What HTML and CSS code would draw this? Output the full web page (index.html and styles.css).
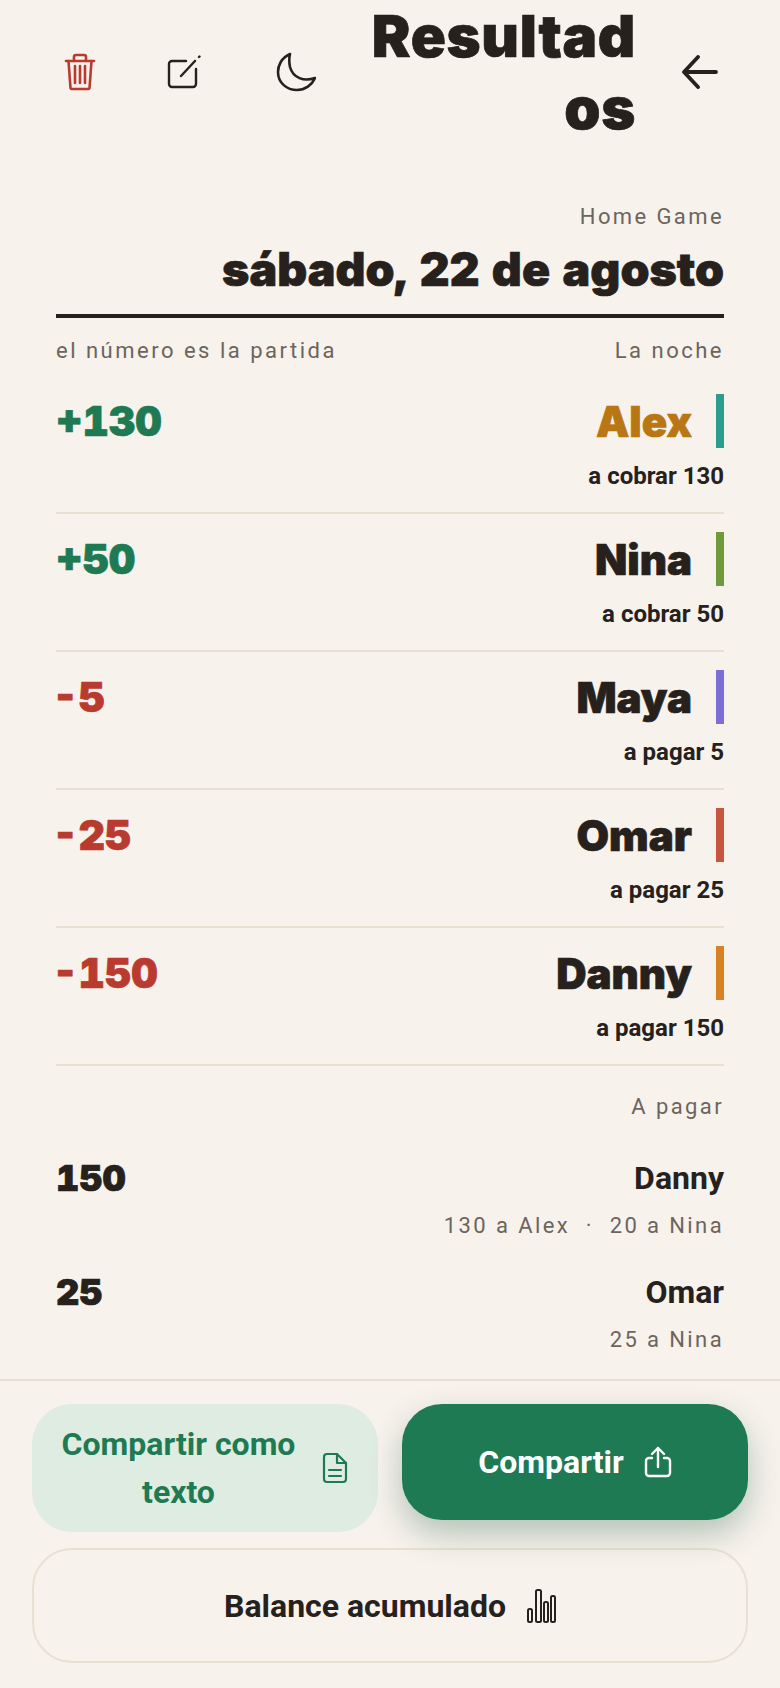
FILE: index.html
```html
<!DOCTYPE html>
<html lang="es">
<head>
    <meta charset="UTF-8">
    <meta name="viewport" content="width=device-width, initial-scale=1.0">
    <title>Resultados</title>
    <link rel="stylesheet" href="styles.css">
</head>
<body>
    <div class="app">
        <header class="topbar">
            <button class="icon-btn trash" aria-label="Borrar">
                <svg width="32" height="38" viewBox="0 0 32 38" fill="none" stroke="currentColor" stroke-width="2.6" stroke-linecap="round" stroke-linejoin="round">
                    <path d="M2 8h28"/>
                    <path d="M10 8V4a2 2 0 0 1 2-2h8a2 2 0 0 1 2 2v4"/>
                    <path d="M4.5 8l2 27a1.5 1.5 0 0 0 1.5 1h16a1.5 1.5 0 0 0 1.5-1l2-27"/>
                    <path d="M11 13v17M16 13v17M21 13v17"/>
                </svg>
            </button>
            <button class="icon-btn edit" aria-label="Editar">
                <svg width="34" height="34" viewBox="0 0 34 34" fill="none" stroke="currentColor" stroke-width="2.4" stroke-linecap="round" stroke-linejoin="round">
                    <path d="M19 6H5a3 3 0 0 0-3 3v20a3 3 0 0 0 3 3h21a3 3 0 0 0 3-3V14"/>
                    <path d="M14 21L28 6"/>
                    <path d="M32 2l.5-.5"/>
                </svg>
            </button>
            <button class="icon-btn moon" aria-label="Tema">
                <svg width="40" height="40" viewBox="0 0 40 40" fill="none" stroke="currentColor" stroke-width="2.6" stroke-linecap="round" stroke-linejoin="round">
                    <path d="M14 2C5 6 2 14 2 20c0 11 9 18 19 18 8 0 15-5 18-12-11 4-22 0-25-11-1-5-1-9 0-13z"/>
                </svg>
            </button>
            <h1 class="title">Resultad<br>os</h1>
            <button class="icon-btn back" aria-label="Volver">
                <svg width="36" height="34" viewBox="0 0 36 34" fill="none" stroke="currentColor" stroke-width="3.8" stroke-linecap="round" stroke-linejoin="round">
                    <path d="M34 17H3"/>
                    <path d="M16 2L2 17l14 15"/>
                </svg>
            </button>
        </header>

        <main class="content">
            <div class="game-label">Home Game</div>
            <div class="game-date">sábado, 22 de agosto</div>

            <div class="table-head">
                <span>el número es la partida</span>
                <span>La noche</span>
            </div>

            <div class="player">
                <div class="player-top">
                    <span class="amount plus">+130</span>
                    <span class="name winner">Alex</span>
                    <span class="color-bar teal"></span>
                </div>
                <div class="settle">a cobrar 130</div>
            </div>
            <div class="player">
                <div class="player-top">
                    <span class="amount plus">+50</span>
                    <span class="name">Nina</span>
                    <span class="color-bar olive"></span>
                </div>
                <div class="settle">a cobrar 50</div>
            </div>
            <div class="player">
                <div class="player-top">
                    <span class="amount minus">-5</span>
                    <span class="name">Maya</span>
                    <span class="color-bar violet"></span>
                </div>
                <div class="settle">a pagar 5</div>
            </div>
            <div class="player">
                <div class="player-top">
                    <span class="amount minus">-25</span>
                    <span class="name">Omar</span>
                    <span class="color-bar brick"></span>
                </div>
                <div class="settle">a pagar 25</div>
            </div>
            <div class="player">
                <div class="player-top">
                    <span class="amount minus">-150</span>
                    <span class="name">Danny</span>
                    <span class="color-bar orange"></span>
                </div>
                <div class="settle">a pagar 150</div>
            </div>

            <div class="pay-head">A pagar</div>
            <div class="payer">
                <div class="payer-top">
                    <span class="payer-amount">150</span>
                    <span class="payer-name">Danny</span>
                </div>
                <div class="payer-detail">130 a Alex &nbsp;·&nbsp; 20 a Nina</div>
            </div>
            <div class="payer">
                <div class="payer-top">
                    <span class="payer-amount">25</span>
                    <span class="payer-name">Omar</span>
                </div>
                <div class="payer-detail">25 a Nina</div>
            </div>
        </main>

        <footer class="actions">
            <div class="actions-row">
                <button class="action soft">
                    <span class="soft-label">Compartir como texto</span>
                    <svg width="26" height="32" viewBox="0 0 26 32" fill="none" stroke="currentColor" stroke-width="2.2" stroke-linecap="round" stroke-linejoin="round">
                        <path d="M15 2H5a3 3 0 0 0-3 3v22a3 3 0 0 0 3 3h16a3 3 0 0 0 3-3V11z"/>
                        <path d="M15 2v9h9"/>
                        <path d="M7 18h12M7 24h12"/>
                    </svg>
                </button>
                <button class="action primary">
                    <span>Compartir</span>
                    <svg width="28" height="32" viewBox="0 0 28 32" fill="none" stroke="currentColor" stroke-width="2.4" stroke-linecap="round" stroke-linejoin="round">
                        <path d="M8 12H5a3 3 0 0 0-3 3v12a3 3 0 0 0 3 3h18a3 3 0 0 0 3-3V15a3 3 0 0 0-3-3h-3"/>
                        <path d="M14 21V2"/>
                        <path d="M8 8l6-6 6 6"/>
                    </svg>
                </button>
            </div>
            <button class="action outline">
                <span>Balance acumulado</span>
                <svg width="30" height="34" viewBox="0 0 30 34" fill="none" stroke="currentColor" stroke-width="2" stroke-linejoin="round">
                    <rect x="2" y="20" width="4" height="13" rx="1.5"/>
                    <rect x="10" y="1" width="5" height="32" rx="1.5"/>
                    <rect x="18" y="13" width="4" height="20" rx="1.5"/>
                    <rect x="25" y="7" width="4" height="26" rx="1.5"/>
                </svg>
            </button>
        </footer>
    </div>
</body>
</html>
```

FILE: styles.css
```css
* {
    box-sizing: border-box;
}

body {
    margin: 0;
    background-color: #f7f2ec;
    color: #26211c;
    font-family: 'Roboto', sans-serif;
}

button {
    font-family: inherit;
    border: none;
    background: none;
    color: inherit;
    padding: 0;
}

.app {
    height: 1688px;
    display: flex;
    flex-direction: column;
    overflow: hidden;
}

/* letra gruesa de titulos y numeros */
.title,
.game-date,
.amount,
.name,
.payer-amount {
    font-family: 'Inter', sans-serif;
    font-weight: 900;
    font-feature-settings: "tnum";
    -webkit-text-stroke: 0.7px currentColor;
}

/* cabecera */
.topbar {
    height: 144px;
    flex: none;
    display: flex;
    align-items: center;
    padding: 0 60px;
}

.icon-btn {
    display: flex;
    flex: none;
    width: 40px;
    justify-content: center;
}

.icon-btn.trash {
    color: #b93a2e;
    margin-right: 64px;
}

.icon-btn.edit {
    margin-right: 72px;
}

.title {
    flex: 1;
    margin: 0 44px 0 0;
    font-size: 58px;
    line-height: 72px;
    letter-spacing: 0.7px;
    text-align: right;
}

/* contenido */
.content {
    flex: 1;
    min-height: 0;
    overflow: hidden;
    padding: 59px 56px 0;
}

.game-label {
    text-align: right;
    font-size: 22px;
    line-height: 28px;
    letter-spacing: 2.4px;
    color: #6b655e;
}

.game-date {
    text-align: right;
    font-size: 46.5px;
    line-height: 60px;
    white-space: nowrap;
    padding: 8px 0 15px;
    border-bottom: 4px solid #26211c;
}

.table-head {
    display: flex;
    justify-content: space-between;
    font-size: 22px;
    line-height: 28px;
    letter-spacing: 2.5px;
    color: #6b655e;
    padding: 19px 0 29px;
}

.player {
    height: 120px;
    border-bottom: 2px solid #e8e1d3;
    margin-bottom: 18px;
}

.player-top {
    display: flex;
    align-items: center;
    height: 54px;
}

.amount {
    flex: 1;
    font-size: 41px;
}

.plus {
    color: #1e7a53;
}

.minus {
    color: #b93a2e;
    margin-left: -4px;
}

.name {
    font-size: 42px;
    margin-right: 24px;
}

.winner {
    color: #b97614;
}

.color-bar {
    width: 8px;
    height: 54px;
}

.teal {
    background-color: #2a9d8f;
}

.olive {
    background-color: #6f9a3a;
}

.violet {
    background-color: #7b6fd6;
}

.brick {
    background-color: #c8553d;
}

.orange {
    background-color: #d98224;
}

.settle {
    margin-top: 13px;
    text-align: right;
    font-size: 24px;
    line-height: 30px;
    font-weight: 700;
}

.pay-head {
    text-align: right;
    font-size: 22px;
    line-height: 28px;
    letter-spacing: 2.4px;
    color: #6b655e;
    margin: 27px 0 35px;
}

.payer {
    margin-bottom: 30px;
}

.payer-top {
    display: flex;
    justify-content: space-between;
    align-items: center;
    height: 44px;
}

.payer-amount {
    font-size: 36px;
}

.payer-name {
    font-size: 32px;
    font-weight: 700;
}

.payer-detail {
    text-align: right;
    font-size: 22px;
    line-height: 28px;
    letter-spacing: 2.4px;
    color: #6b655e;
    margin-top: 12px;
}

/* botones de abajo */
.actions {
    flex: none;
    height: 309px;
    border-top: 2px solid #e8e1d3;
    padding: 23px 32px 0;
}

.actions-row {
    display: grid;
    grid-template-columns: 1fr 1fr;
    align-items: start;
    gap: 24px;
    margin-bottom: 16px;
}

.action {
    display: flex;
    align-items: center;
    justify-content: center;
    gap: 20px;
    font-size: 32px;
    line-height: 48px;
    font-weight: 700;
    border-radius: 40px;
}

.soft {
    height: 128px;
    background-color: #dfece2;
    color: #1e7a53;
    padding: 0 30px 0 28px;
    gap: 25px;
}

.soft-label {
    flex: 1;
    text-align: center;
}

.primary {
    height: 116px;
    background-color: #1e7a53;
    color: #fff;
    box-shadow: 0 14px 32px rgba(28, 90, 60, 0.3);
}

.outline {
    width: 100%;
    height: 115px;
    border: 2px solid #e8e1d3;
}
```
